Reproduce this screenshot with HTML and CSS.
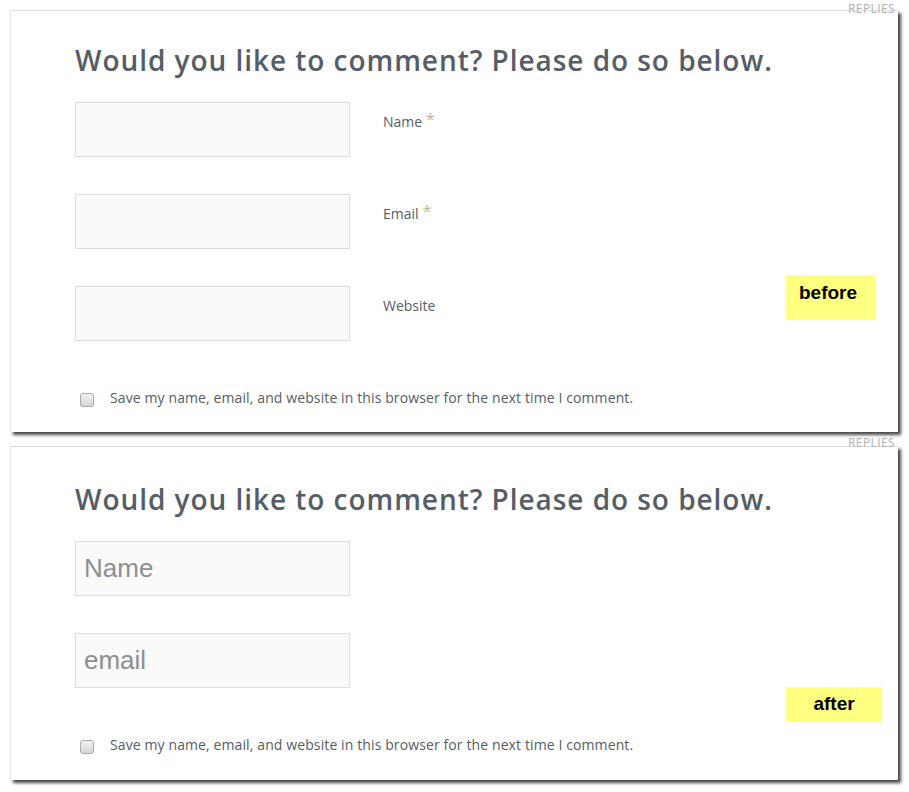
FILE: index.html
```html
<!DOCTYPE html>
<html>
<head>
<meta charset="utf-8">
<link rel="stylesheet" href="styles.css">
</head>
<body>
<div class="page">
  <section class="panel panel-before">
    <span class="replies">Replies</span>
    <h2 class="title">Would you like to comment? Please do so below.</h2>
    <form class="form">
      <div class="row">
        <input class="field" type="text">
        <label class="label">Name <span class="req">*</span></label>
      </div>
      <div class="row">
        <input class="field" type="text">
        <label class="label">Email <span class="req">*</span></label>
      </div>
      <div class="row">
        <input class="field" type="text">
        <label class="label">Website</label>
      </div>
      <div class="consent">
        <input class="check" type="checkbox">
        <span class="consent-text">Save my name, email, and website in this browser for the next time I comment.</span>
      </div>
    </form>
    <div class="tag tag-before">before</div>
  </section>

  <section class="panel panel-after">
    <span class="replies">Replies</span>
    <h2 class="title">Would you like to comment? Please do so below.</h2>
    <form class="form">
      <div class="row">
        <input class="field field-ph" type="text" placeholder="Name">
      </div>
      <div class="row">
        <input class="field field-ph" type="text" placeholder="email">
      </div>
      <div class="consent">
        <input class="check" type="checkbox">
        <span class="consent-text">Save my name, email, and website in this browser for the next time I comment.</span>
      </div>
    </form>
    <div class="tag tag-after">after</div>
  </section>
</div>
</body>
</html>
```

FILE: styles.css
```css
html, body {
  margin: 0;
  padding: 0;
  background: #ffffff;
}

.page {
  width: 909px;
  height: 792px;
  padding: 10px 0 0 10px;
  box-sizing: border-box;
  display: flex;
  flex-direction: column;
  gap: 14px;
  font-family: "Open Sans", "Liberation Sans", sans-serif;
}

.panel {
  position: relative;
  width: 888px;
  box-sizing: border-box;
  background: #ffffff;
  border-top: 1px solid #dcdcdc;
  border-left: 1px solid #e6e6e6;
  box-shadow: 3px 3px 3px rgba(0, 0, 0, 0.72);
  padding-left: 64px;
}

.panel-before {
  height: 422px;
}

.panel-after {
  height: 334px;
}

.replies {
  position: absolute;
  top: -8px;
  right: 3px;
  font-size: 12px;
  line-height: 12px;
  text-transform: uppercase;
  color: #b0b0b0;
  letter-spacing: 0.4px;
}

.panel-after .replies {
  top: -10px;
}

.title {
  margin: 30px 0 0 0;
  font-size: 28px;
  font-weight: 600;
  line-height: 38px;
  color: #555d66;
  letter-spacing: 0.95px;
}

.panel-after .title {
  margin-top: 33px;
}

.form {
  margin-top: 23px;
  display: flex;
  flex-direction: column;
  gap: 37px;
}

.row {
  display: flex;
  align-items: flex-start;
  gap: 33px;
}

.field {
  width: 275px;
  height: 55px;
  box-sizing: border-box;
  margin: 0;
  border: 1px solid #dddddd;
  background: #fafafa;
  outline: none;
  padding: 0 8px;
  font-family: "Liberation Sans", Arial, sans-serif;
  font-size: 26px;
  color: #888e92;
}

.field-ph::placeholder {
  color: #8a8f93;
  opacity: 1;
}

.label {
  margin-top: 10px;
  font-size: 14px;
  line-height: 20px;
  font-weight: 500;
  color: #555d66;
}

.req {
  color: #c9b98f;
  font-size: 17px;
  vertical-align: top;
  position: relative;
  top: -3px;
}

.consent {
  margin-top: 10px;
  display: flex;
  align-items: center;
  gap: 16px;
  padding-left: 5px;
  line-height: 20px;
}

.check {
  appearance: none;
  -webkit-appearance: none;
  width: 14px;
  height: 14px;
  margin: 4px 0 0 0;
  box-sizing: border-box;
  border: 1px solid #a9a9a9;
  border-radius: 3px;
  background: linear-gradient(#f2f2f2, #d6d6d6);
}

.consent-text {
  font-size: 14px;
  color: #555d66;
  letter-spacing: 0.11px;
}

.tag {
  position: absolute;
  background: #ffff80;
  color: #000000;
  font-family: "Liberation Sans", Arial, sans-serif;
  font-weight: 700;
  font-size: 19px;
  box-sizing: border-box;
}

.tag-before {
  left: 775px;
  top: 264px;
  width: 90px;
  height: 44px;
  padding: 7px 0 0 13px;
}

.tag-after {
  left: 775px;
  top: 240px;
  width: 96px;
  height: 35px;
  padding-top: 6px;
  text-align: center;
}
```
